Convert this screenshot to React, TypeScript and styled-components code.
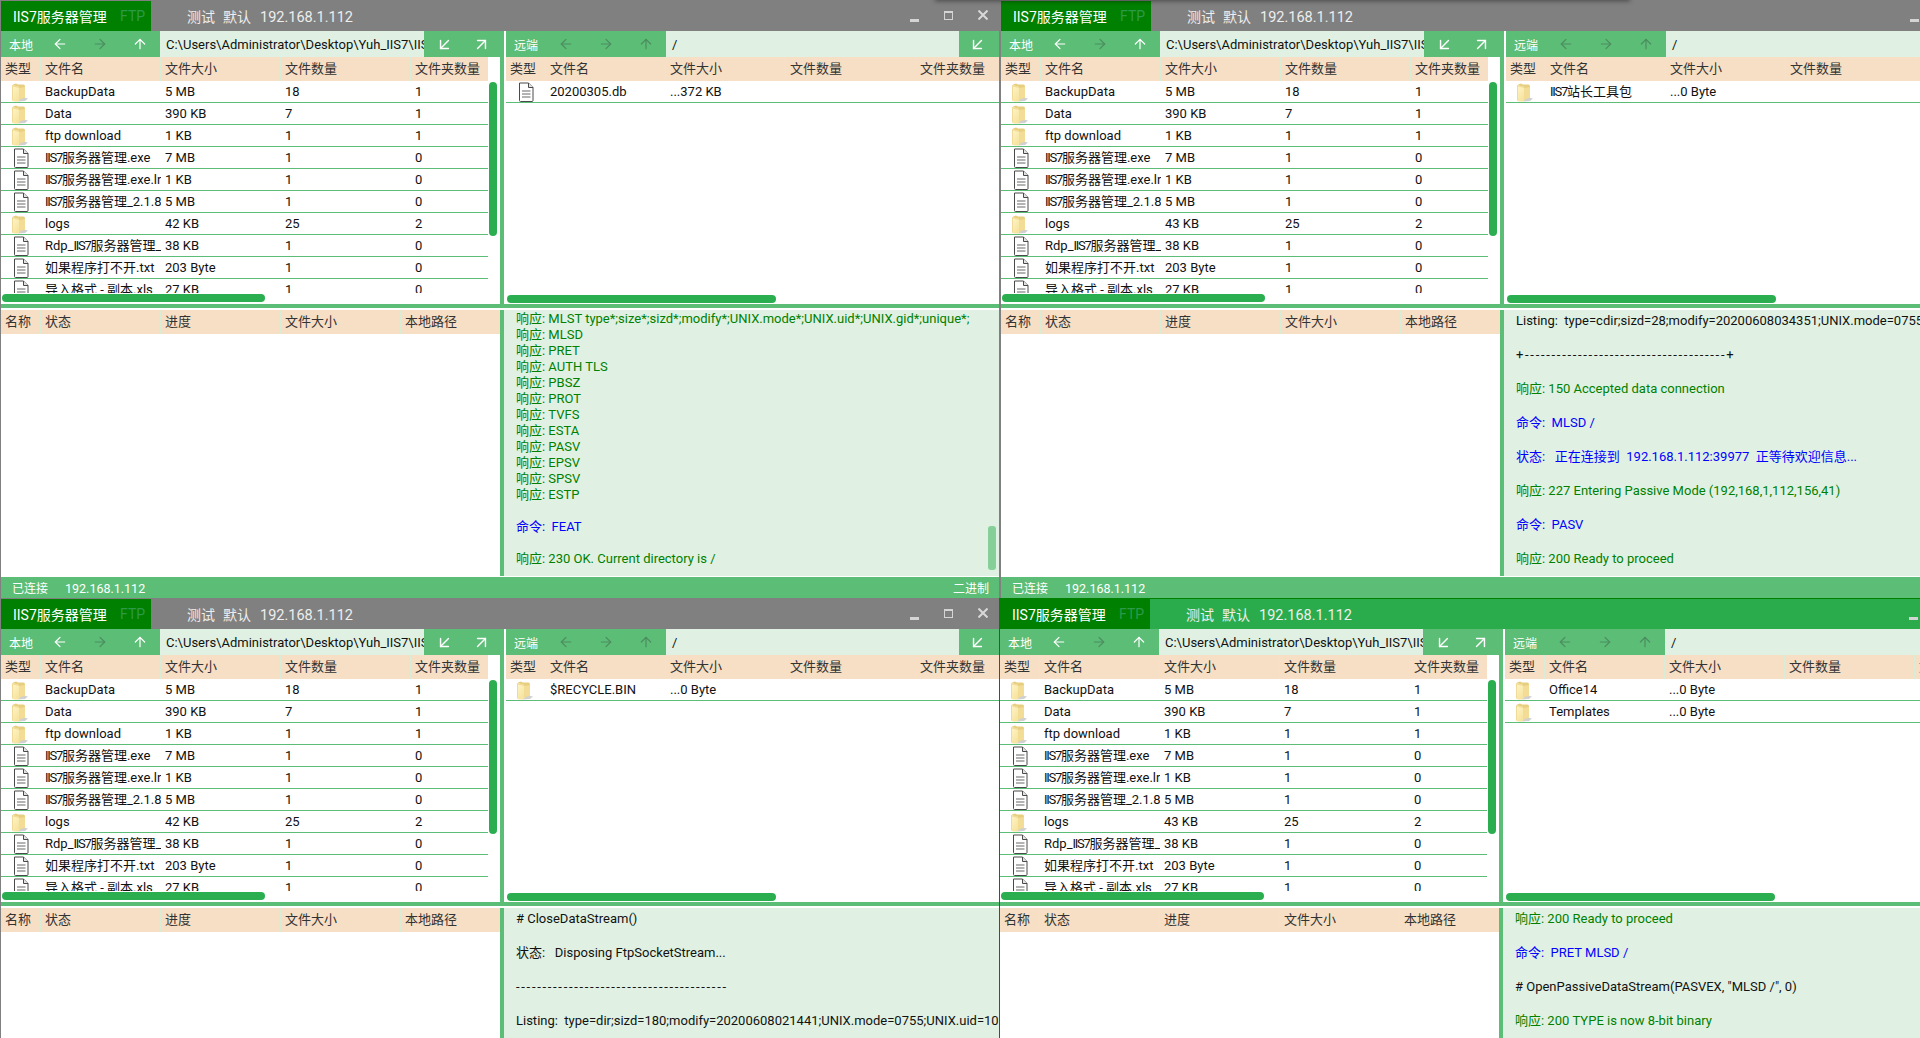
import React from 'react'
import styled, { createGlobalStyle } from 'styled-components'
import { ArrowLeft, ArrowRight, ArrowUp, ArrowDownLeft, ArrowUpRight } from 'lucide-react'

type LogKind = 'ok' | 'cmd' | 'plain' | 'rule'
type LogEntry = { kind: LogKind; text: string }
type FileRowData = { type: 'folder' | 'file'; name: string; size: string; count?: string; folders?: string }

const GREEN = '#5cbd76'

const GlobalStyle = createGlobalStyle`
html, body {
  margin: 0;
  height: 100%;
  overflow: hidden;
  background: #fff;
}
body {
  font-family: Roboto, "Noto Sans CJK SC", sans-serif;
  font-size: 13px;
  color: #111;
}
`

const localRows = (logs: string): FileRowData[] => [
  { type: 'folder', name: 'BackupData', size: '5 MB', count: '18', folders: '1' },
  { type: 'folder', name: 'Data', size: '390 KB', count: '7', folders: '1' },
  { type: 'folder', name: 'ftp download', size: '1 KB', count: '1', folders: '1' },
  { type: 'file', name: 'IIS7服务器管理.exe', size: '7 MB', count: '1', folders: '0' },
  { type: 'file', name: 'IIS7服务器管理.exe.lr', size: '1 KB', count: '1', folders: '0' },
  { type: 'file', name: 'IIS7服务器管理_2.1.8', size: '5 MB', count: '1', folders: '0' },
  { type: 'folder', name: 'logs', size: logs, count: '25', folders: '2' },
  { type: 'file', name: 'Rdp_IIS7服务器管理_', size: '38 KB', count: '1', folders: '0' },
  { type: 'file', name: '如果程序打不开.txt', size: '203 Byte', count: '1', folders: '0' },
  { type: 'file', name: '导入格式 - 副本.xls', size: '27 KB', count: '1', folders: '0' },
]

const topLeftLog: LogEntry[] = [
  { kind: 'ok', text: '响应: MLST type*;size*;sizd*;modify*;UNIX.mode*;UNIX.uid*;UNIX.gid*;unique*;' },
  { kind: 'ok', text: '响应: MLSD' },
  { kind: 'ok', text: '响应: PRET' },
  { kind: 'ok', text: '响应: AUTH TLS' },
  { kind: 'ok', text: '响应: PBSZ' },
  { kind: 'ok', text: '响应: PROT' },
  { kind: 'ok', text: '响应: TVFS' },
  { kind: 'ok', text: '响应: ESTA' },
  { kind: 'ok', text: '响应: PASV' },
  { kind: 'ok', text: '响应: EPSV' },
  { kind: 'ok', text: '响应: SPSV' },
  { kind: 'ok', text: '响应: ESTP' },
  { kind: 'ok', text: ' ' },
  { kind: 'cmd', text: '命令:  FEAT' },
  { kind: 'ok', text: ' ' },
  { kind: 'ok', text: '响应: 230 OK. Current directory is /' },
]

const topRightLog: LogEntry[] = [
  { kind: 'plain', text: 'Listing:  type=cdir;sizd=28;modify=20200608034351;UNIX.mode=0755' },
  { kind: 'rule', text: '+--------------------------------------+' },
  { kind: 'ok', text: '响应: 150 Accepted data connection' },
  { kind: 'cmd', text: '命令:  MLSD /' },
  { kind: 'cmd', text: '状态:   正在连接到  192.168.1.112:39977  正等待欢迎信息...' },
  { kind: 'ok', text: '响应: 227 Entering Passive Mode (192,168,1,112,156,41)' },
  { kind: 'cmd', text: '命令:  PASV' },
  { kind: 'ok', text: '响应: 200 Ready to proceed' },
]

const bottomLeftLog: LogEntry[] = [
  { kind: 'plain', text: '# CloseDataStream()' },
  { kind: 'plain', text: '状态:   Disposing FtpSocketStream...' },
  { kind: 'rule', text: '----------------------------------------' },
  { kind: 'plain', text: 'Listing:  type=dir;sizd=180;modify=20200608021441;UNIX.mode=0755;UNIX.uid=10' },
]

const bottomRightLog: LogEntry[] = [
  { kind: 'ok', text: '响应: 200 Ready to proceed' },
  { kind: 'cmd', text: '命令:  PRET MLSD /' },
  { kind: 'plain', text: '# OpenPassiveDataStream(PASVEX, "MLSD /", 0)' },
  { kind: 'ok', text: '响应: 200 TYPE is now 8-bit binary' },
]

const FolderIcon = () => (
  <IconBox width="22" height="20" viewBox="0 0 22 20">
    <defs>
      <linearGradient id="folderFront" x1="0" y1="0" x2="0.6" y2="1">
        <stop offset="0" stopColor="#fff6c8" />
        <stop offset="1" stopColor="#f6e39f" />
      </linearGradient>
    </defs>
    <path d="M11 15 L18 16.5 L15 19 L8 19.5 Z" fill="#bdbdbd" opacity="0.7" />
    <path d="M3 2.5 L6 1.5 L8 2.5 L13.5 2.5 Q15 2.7 15 4.5 L15 15.5 L8 18 Z" fill="#e8cf80" />
    <path d="M2 3 L8 4.5 Q9.6 5 9.6 7 L9.6 17.5 Q9.6 19 8 19.5 L4 19.5 Q2 19 2 17 Z" fill="url(#folderFront)" />
    <path d="M9.6 6 L15 5 L15 15.5 L9.6 17.5 Z" fill="#f2dc96" />
    <path d="M2 3 L8 4.5 Q9 4.8 9.4 6 L3 4.5 L3 19 Q2 18.5 2 17 Z" fill="#f0da98" />
  </IconBox>
)

const FileIcon = () => (
  <IconBox width="22" height="20" viewBox="0 0 22 20">
    <path
      d="M4.5 1 L13.5 1 L18 5.5 L18 18.5 Q18 19.5 17 19.5 L5.5 19.5 Q4.5 19.5 4.5 18.5 Z"
      fill="#fff"
      stroke="#4a4a4a"
      strokeWidth="1"
    />
    <path d="M13.5 1 L13.5 5.5 L18 5.5" fill="#e4e4e4" stroke="#4a4a4a" strokeWidth="1" />
    <path d="M7 9 H15.5 M7 12 H15.5 M7 15 H15.5" stroke="#9a9a9a" strokeWidth="1.6" />
  </IconBox>
)

// the "IIS7" in these names is drawn narrower than the rest of the label
const FileName = ({ name }: { name: string }) => {
  const parts = name.split('IIS7')
  if (parts.length === 1) return <>{name}</>
  return (
    <>
      {parts[0]}
      <TightText>IIS7</TightText>
      {parts[1]}
    </>
  )
}

const FileList = ({ rows }: { rows: FileRowData[] }) => (
  <TableColumn>
    <FileHeader>
      <HeadCell>类型</HeadCell>
      <HeadCell>文件名</HeadCell>
      <HeadCell>文件大小</HeadCell>
      <HeadCell>文件数量</HeadCell>
      <HeadCell>文件夹数量</HeadCell>
    </FileHeader>
    {rows.map((row) => (
      <FileRow key={row.name}>
        <TypeCell>{row.type === 'folder' ? <FolderIcon /> : <FileIcon />}</TypeCell>
        <Cell><FileName name={row.name} /></Cell>
        <Cell>{row.size}</Cell>
        <Cell>{row.count}</Cell>
        <Cell>{row.folders}</Cell>
      </FileRow>
    ))}
  </TableColumn>
)

const FtpWindow = ({
  active,
  local,
  remote,
  log,
  dense,
  thumb,
}: {
  active?: boolean
  local: FileRowData[]
  remote: FileRowData[]
  log: LogEntry[]
  dense?: boolean
  thumb?: boolean
}) => (
  <WindowFrame $active={active}>
    <TitleBar $active={active}>
      <Brand>
        <BrandName>IIS7服务器管理</BrandName>
        <BrandTag>FTP</BrandTag>
      </Brand>
      <Session>
        <span>测试</span>
        <span>默认</span>
        <SessionIp>192.168.1.112</SessionIp>
      </Session>
      <WindowButtons>
        <MinimizeGlyph />
        <MaximizeGlyph />
        <CloseGlyph viewBox="0 0 10 10">
          <path d="M0.5 0.5 L9.5 9.5 M9.5 0.5 L0.5 9.5" stroke="#d8d8d8" strokeWidth="2" />
        </CloseGlyph>
      </WindowButtons>
    </TitleBar>

    <UpperArea>
      <LocalPane>
        <Toolbar>
          <SideLabel>本地</SideLabel>
          <NavButton><ArrowLeft size={16} strokeWidth={1.8} /></NavButton>
          <NavButton $dim><ArrowRight size={16} strokeWidth={1.8} /></NavButton>
          <NavButton><ArrowUp size={16} strokeWidth={1.8} /></NavButton>
          <PathBox $width={264}>C:\Users\Administrator\Desktop\Yuh_IIS7\IIS</PathBox>
          <ActionButton $shift={2}><ArrowDownLeft size={19} strokeWidth={1.8} /></ActionButton>
          <ActionButton><ArrowUpRight size={19} strokeWidth={1.8} /></ActionButton>
        </Toolbar>
        <ListArea>
          <ListClip $width={487}>
            <FileList rows={local} />
          </ListClip>
          <VerticalTrack>
            <VerticalThumb />
          </VerticalTrack>
        </ListArea>
        <HorizontalTrack $top={1}>
          <HorizontalThumb $width={263} />
        </HorizontalTrack>
      </LocalPane>

      <Gutter />

      <RemotePane>
        <Toolbar>
          <SideLabel>远端</SideLabel>
          <NavButton $dim><ArrowLeft size={16} strokeWidth={1.8} /></NavButton>
          <NavButton $dim><ArrowRight size={16} strokeWidth={1.8} /></NavButton>
          <NavButton $dim><ArrowUp size={16} strokeWidth={1.8} /></NavButton>
          <PathBox $width={293}>/</PathBox>
          <ActionButton><ArrowDownLeft size={19} strokeWidth={1.8} /></ActionButton>
        </Toolbar>
        <ListArea>
          <ListClip $width={493}>
            <FileList rows={remote} />
          </ListClip>
        </ListArea>
        <HorizontalTrack $top={2}>
          <HorizontalThumb $width={269} />
        </HorizontalTrack>
      </RemotePane>
    </UpperArea>

    <SplitLine />

    <LowerArea>
      <TransferPane>
        <TransferHeader>
          <HeadCell>名称</HeadCell>
          <HeadCell>状态</HeadCell>
          <HeadCell>进度</HeadCell>
          <HeadCell>文件大小</HeadCell>
          <HeadCell>本地路径</HeadCell>
        </TransferHeader>
      </TransferPane>
      <Gutter />
      <LogPane $dense={dense}>
        {log.map((entry, i) => (
          <LogLine key={i} $kind={entry.kind}>{entry.text}</LogLine>
        ))}
        {thumb && <LogThumb />}
      </LogPane>
    </LowerArea>

    <StatusBar>
      <StatusLeft>
        <span>已连接</span>
        <StatusIp>192.168.1.112</StatusIp>
      </StatusLeft>
      <span>二进制</span>
    </StatusBar>
  </WindowFrame>
)

const App = () => {
  return (
    <Page>
      <GlobalStyle />
      <TopShadow />
      <FtpWindow
        local={localRows('42 KB')}
        remote={[{ type: 'file', name: '20200305.db', size: '...372 KB' }]}
        log={topLeftLog}
        dense
        thumb
      />
      <FtpWindow
        local={localRows('43 KB')}
        remote={[{ type: 'folder', name: 'IIS7站长工具包', size: '...0 Byte' }]}
        log={topRightLog}
      />
      <FtpWindow
        local={localRows('42 KB')}
        remote={[{ type: 'folder', name: '$RECYCLE.BIN', size: '...0 Byte' }]}
        log={bottomLeftLog}
      />
      <FtpWindow
        active
        local={localRows('43 KB')}
        remote={[
          { type: 'folder', name: 'Office14', size: '...0 Byte' },
          { type: 'folder', name: 'Templates', size: '...0 Byte' },
        ]}
        log={bottomRightLog}
      />
    </Page>
  )
}

const Page = styled.div`
position: relative;
width: 1920px;
height: 1038px;
overflow: hidden;
display: grid;
grid-template-columns: 1000px 1000px;
grid-auto-rows: 598px;
`

const TopShadow = styled.div`
position: absolute;
z-index: 2;
top: -6px;
left: 935px;
width: 695px;
height: 6px;
box-shadow: 0 1px 5px rgba(0, 0, 0, 0.45);
`

const WindowFrame = styled.div<{ $active?: boolean }>`
box-sizing: border-box;
width: 1000px;
height: 598px;
margin-left: ${(p) => (p.$active ? '-1px' : '0')};
display: flex;
flex-direction: column;
background: #fff;
border: 1px solid ${(p) => (p.$active ? '#008000' : '#808080')};
border-bottom: none;
`

const TitleBar = styled.div<{ $active?: boolean }>`
flex: 0 0 30px;
display: flex;
align-items: center;
background: ${(p) => (p.$active ? '#2bac4c' : '#808080')};
color: #eee;
`

const Brand = styled.div`
width: 150px;
height: 100%;
flex: none;
display: flex;
align-items: center;
background: #008000;
padding-left: 12px;
box-sizing: border-box;
`

const BrandName = styled.span`
color: #fff;
font-size: 14px;
width: 107px;
white-space: nowrap;
`

const BrandTag = styled.span`
color: #2d9a4a;
font-size: 14px;
`

const Session = styled.div`
margin-left: 36px;
display: flex;
align-items: baseline;
gap: 8px;
font-size: 14px;
white-space: nowrap;
`

const SessionIp = styled.span`
font-size: 14.5px;
margin-left: 1px;
`

const WindowButtons = styled.div`
margin-left: auto;
width: 89px;
padding-right: 11px;
height: 100%;
flex: none;
display: flex;
align-items: center;
justify-content: space-between;
box-sizing: border-box;
`

const MinimizeGlyph = styled.span`
width: 9px;
height: 3px;
margin-top: 8px;
background: #d4d4d4;
`

const MaximizeGlyph = styled.span`
box-sizing: border-box;
width: 9px;
height: 9px;
margin-top: -2px;
border: 1px solid #d4d4d4;
border-top-width: 2px;
`

const CloseGlyph = styled.svg`
width: 10px;
height: 10px;
margin-top: -2px;
`

const UpperArea = styled.div`
flex: 0 0 273px;
display: flex;
`

const LocalPane = styled.div`
width: 499px;
flex: none;
display: flex;
flex-direction: column;
overflow: hidden;
`

const RemotePane = styled.div`
flex: 1;
min-width: 0;
padding-left: 2px;
display: flex;
flex-direction: column;
overflow: hidden;
`

const Gutter = styled.div`
flex: 0 0 4px;
background: ${GREEN};
`

const Toolbar = styled.div`
flex: 0 0 26px;
display: flex;
align-items: stretch;
background: ${GREEN};
color: #fff;
`

const SideLabel = styled.div`
box-sizing: border-box;
width: 40px;
padding-left: 8px;
display: flex;
align-items: center;
font-size: 12px;
`

const NavButton = styled.div<{ $dim?: boolean }>`
width: 40px;
flex: none;
display: flex;
align-items: center;
justify-content: center;
color: ${(p) => (p.$dim ? '#4c8d60' : '#fff')};
`

const PathBox = styled.div<{ $width: number }>`
box-sizing: border-box;
width: ${(p) => p.$width}px;
flex: none;
padding: 2px 4px 0 6px;
background: #e0f1e3;
color: #111;
line-height: 24px;
white-space: nowrap;
overflow: hidden;
`

const ActionButton = styled.div<{ $shift?: number }>`
width: 37px;
flex: none;
margin-left: ${(p) => p.$shift ?? 0}px;
display: flex;
align-items: center;
justify-content: center;
color: #fff;
&:only-of-type {
  width: 40px;
}
`

const ListArea = styled.div`
height: 236px;
flex: none;
display: flex;
`

const ListClip = styled.div<{ $width: number }>`
width: ${(p) => p.$width}px;
flex: none;
overflow: hidden;
`

const TableColumn = styled.div`
display: flex;
flex-direction: column;
`

const FileHeader = styled.div`
height: 24px;
flex: none;
display: grid;
grid-template-columns: 40px 120px 120px 130px 1fr;
background: #f7dfc5;
`

const TransferHeader = styled(FileHeader)`
grid-template-columns: 40px 120px 120px 120px 1fr;
`

const HeadCell = styled.div`
box-sizing: border-box;
padding-left: 4px;
line-height: 23px;
color: #333;
border-right: 1px solid #d8ecd6;
white-space: nowrap;
overflow: hidden;
&:last-child {
  border-right: none;
}
`

const FileRow = styled.div`
box-sizing: border-box;
height: 22px;
flex: none;
display: grid;
grid-template-columns: 40px 120px 120px 130px 1fr;
border-bottom: 1px solid ${GREEN};
`

const Cell = styled.div`
padding-left: 4px;
line-height: 21px;
color: #111;
white-space: nowrap;
overflow: hidden;
`

const TightText = styled.span`
letter-spacing: -1.3px;
`

const TypeCell = styled.div`
display: flex;
align-items: center;
padding-left: 9px;
overflow: hidden;
`

const IconBox = styled.svg`
flex: none;
display: block;
`

const VerticalTrack = styled.div`
flex: 1;
padding: 25px 0 0 1px;
`

const VerticalThumb = styled.div`
width: 8px;
height: 154px;
border-radius: 4px;
background: #2bae50;
`

const HorizontalTrack = styled.div<{ $top: number }>`
flex: 1;
padding: ${(p) => p.$top}px 0 0 1px;
background: #fff;
`

const HorizontalThumb = styled.div<{ $width: number }>`
width: ${(p) => p.$width}px;
height: 8px;
border-radius: 4px;
background: #2bae50;
`

const SplitLine = styled.div`
flex: 0 0 4px;
background: ${GREEN};
`

const LowerArea = styled.div`
flex: 0 0 266px;
margin: 2px 0 1px;
display: flex;
`

const TransferPane = styled.div`
width: 499px;
flex: none;
`

const LogPane = styled.div<{ $dense?: boolean }>`
position: relative;
flex: 1;
min-width: 0;
overflow: hidden;
background: #e0f1e3;
padding: ${(p) => (p.$dense ? '1px' : '3px')} 0 0 12px;
display: flex;
flex-direction: column;
row-gap: ${(p) => (p.$dense ? '0' : '18px')};
`

const logColors: Record<LogKind, string> = {
  ok: '#008000',
  cmd: '#0000ff',
  plain: '#111',
  rule: '#111',
}

const LogLine = styled.div<{ $kind: LogKind }>`
line-height: 16px;
height: 16px;
flex: none;
white-space: pre;
color: ${(p) => logColors[p.$kind]};
letter-spacing: ${(p) => (p.$kind === 'rule' ? '1.7px' : 'normal')};
`

const LogThumb = styled.div`
position: absolute;
top: 216px;
left: 484px;
width: 8px;
height: 44px;
border-radius: 3px;
background: #86cf98;
`

const StatusBar = styled.div`
flex: 0 0 21px;
display: flex;
align-items: center;
justify-content: space-between;
padding: 0 10px 0 11px;
background: ${GREEN};
color: #fff;
font-size: 12px;
white-space: nowrap;
`

const StatusLeft = styled.div`
display: flex;
align-items: baseline;
gap: 17px;
`

const StatusIp = styled.span`
font-size: 12.5px;
`

export default App
